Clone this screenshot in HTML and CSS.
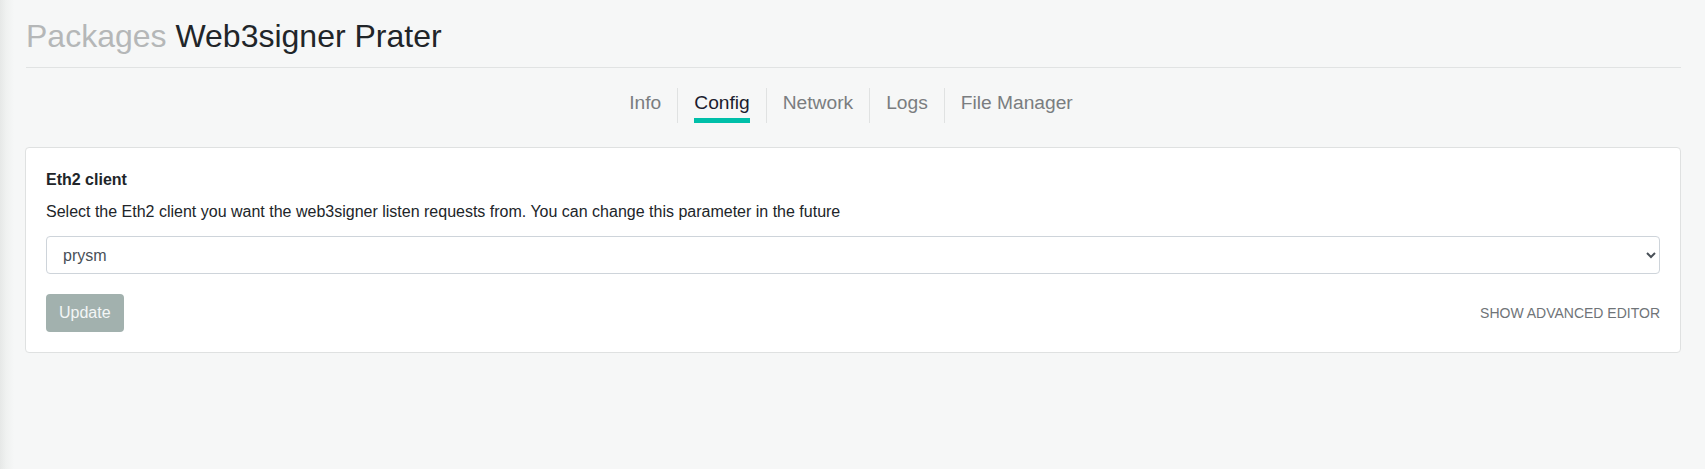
FILE: index.html
```html
<!DOCTYPE html>
<html lang="en">
<head>
<meta charset="utf-8">
<title>Web3signer Prater</title>
<link rel="stylesheet" href="styles.css">
</head>
<body>
<main class="page">
  <h1 class="title"><span class="title-muted">Packages</span> Web3signer Prater</h1>
  <hr class="divider">
  <nav class="tabs">
    <a class="tab">Info</a>
    <a class="tab active">Config</a>
    <a class="tab">Network</a>
    <a class="tab">Logs</a>
    <a class="tab">File Manager</a>
  </nav>
  <section class="card">
    <div class="field-label">Eth2 client</div>
    <div class="field-desc">Select the Eth2 client you want the web3signer listen requests from. You can change this parameter in the future</div>
    <select class="field-select">
      <option>prysm</option>
      <option>lighthouse</option>
      <option>teku</option>
      <option>nimbus</option>
    </select>
    <div class="card-actions">
      <button class="btn-update" disabled>Update</button>
      <span class="advanced">SHOW ADVANCED EDITOR</span>
    </div>
  </section>
</main>
</body>
</html>
```
FILE: styles.css
```css
html, body {
  margin: 0;
  padding: 0;
}
body {
  min-height: 469px;
  background: linear-gradient(to right, #e6e8e7 0px, #eff1f0 6px, #f6f7f7 14px, #f6f7f7 100%);
  font-family: "Liberation Sans", Arial, sans-serif;
  color: #212529;
}
.page {
  padding: 17px 24px 0 25px;
}
.title {
  margin: 0;
  font-size: 32px;
  font-weight: 400;
  line-height: 38.4px;
  color: #212529;
  padding-left: 1px;
}
.title-muted {
  color: #b5b7b8;
}
.divider {
  margin: 12px 0 0 1px;
  border: 0;
  border-top: 1px solid #e1e3e3;
  height: 0;
}
.tabs {
  display: flex;
  justify-content: center;
  margin-top: 20px;
  margin-right: 4px;
}
.tab {
  display: flex;
  flex-direction: column;
  align-items: stretch;
  padding: 0 16px;
  font-size: 19.2px;
  line-height: 29px;
  color: #7a7d80;
  border-left: 1px solid #e0e2e2;
  height: 35px;
  box-sizing: border-box;
}
.tab:first-child {
  border-left: 0;
}
.tab::after {
  content: "";
  display: block;
  height: 5px;
  margin-top: 1px;
}
.tab.active {
  color: #1c1c2e;
}
.tab.active::after {
  background: #00bfa9;
}
.card {
  margin-top: 24px;
  background: #ffffff;
  border: 1px solid #dfe1e1;
  border-radius: 4px;
  padding: 20px;
}
.field-label {
  font-size: 16px;
  font-weight: 700;
  line-height: 24px;
  color: #212529;
}
.field-desc {
  margin-top: 8px;
  font-size: 16px;
  line-height: 24px;
  color: #212529;
}
.field-select {
  display: block;
  margin-top: 12px;
  width: 100%;
  height: 38px;
  padding: 6px 12px;
  font-family: "Liberation Sans", Arial, sans-serif;
  font-size: 16px;
  color: #495057;
  background-color: #ffffff;
  border: 1px solid #ced4da;
  border-radius: 4px;
  box-sizing: border-box;
}
.card-actions {
  margin-top: 20px;
  display: flex;
  justify-content: space-between;
  align-items: center;
}
.btn-update {
  height: 38px;
  padding: 0 13px;
  font-family: "Liberation Sans", Arial, sans-serif;
  font-size: 16px;
  color: #f3f6f6;
  background: #a2b1ae;
  border: 0;
  border-radius: 4px;
}
.advanced {
  font-size: 14px;
  color: #6f7478;
}
```
